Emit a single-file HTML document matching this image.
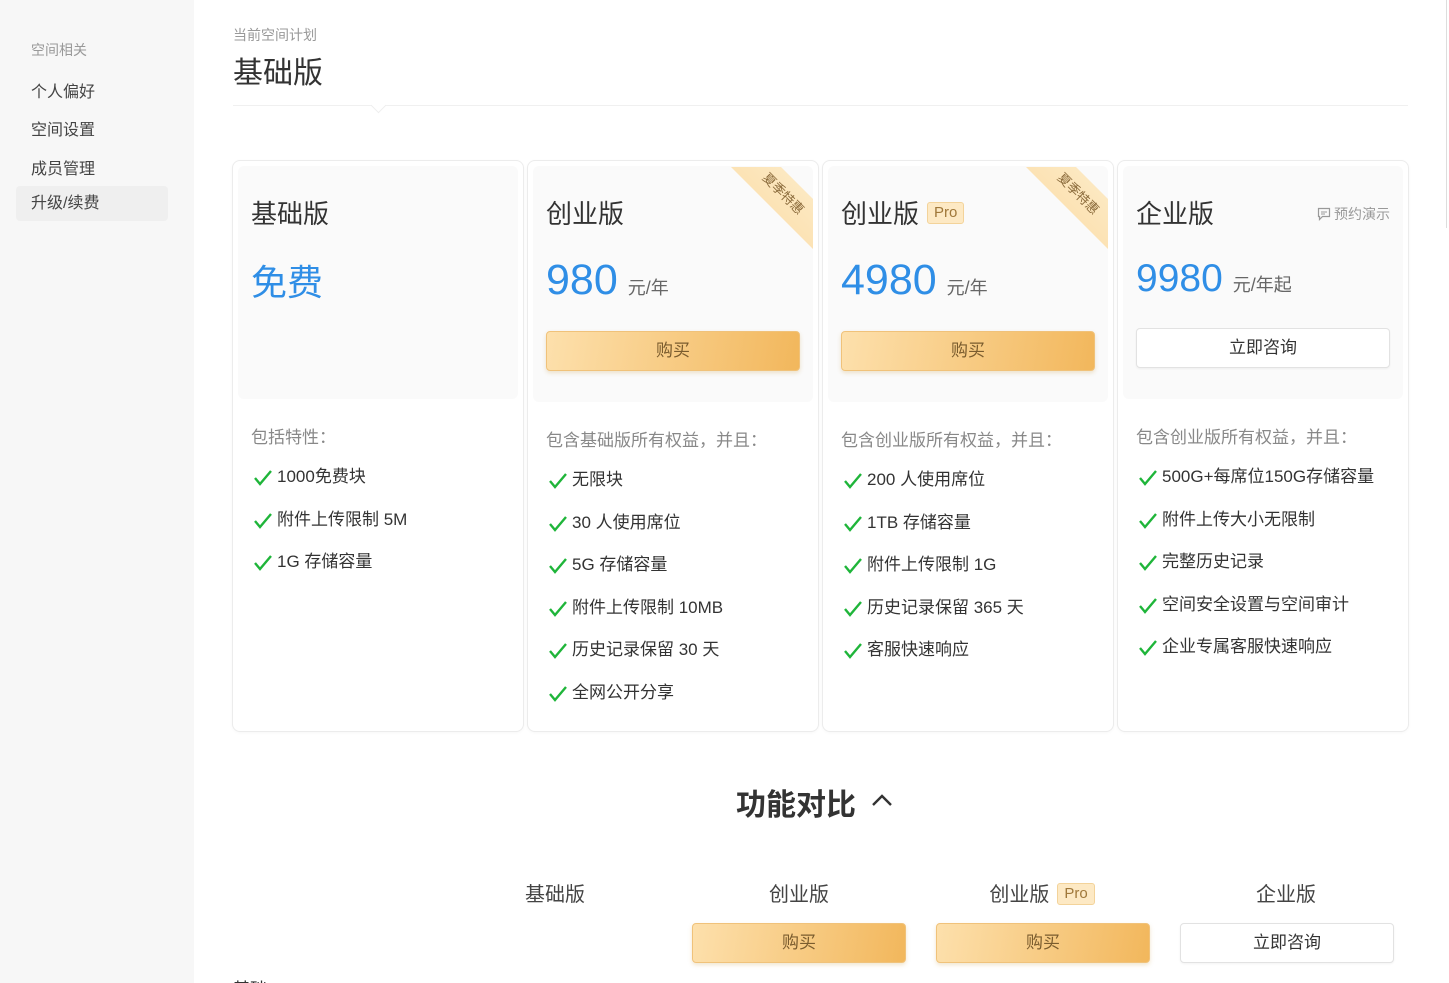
<!DOCTYPE html><html><head><meta charset="utf-8"><style>
*{box-sizing:border-box;margin:0;padding:0}
html,body{width:1449px;height:983px;overflow:hidden}
body{background:#fff;font-family:"Liberation Sans","Noto Sans CJK SC",sans-serif;color:#333;position:relative}
.side{position:absolute;left:0;top:0;width:194px;height:983px;background:#f7f7f7}
.side div{position:absolute;left:31px;font-size:16px;color:#444}
.abs{position:absolute}
.card{position:absolute;top:160px;height:572px;border:1px solid #ececec;border-radius:8px;background:#fff;box-shadow:0 1px 3px rgba(0,0,0,.03)}
.top{position:absolute;left:5px;right:5px;top:5px;height:233px;background:#fafafa;border-radius:6px}
.title{position:absolute;left:18px;top:33px;font-size:26px;color:#333}
.price{position:absolute;left:18px;top:95px;font-size:43px;color:#2f8ee6}
.price span{font-size:18px;color:#666;margin-left:10px}
.btn{position:absolute;left:18px;width:254px;height:40px;top:170px;border-radius:4px;background:linear-gradient(100deg,#fde0ac,#f2b75c);border:1px solid #f0c27a;box-shadow:0 2px 4px rgba(200,150,60,.25);text-align:center;line-height:38px;font-size:17px;color:#7a5c2e}
.wbtn{background:#fff;border:1px solid #e2e2e2;box-shadow:0 1px 2px rgba(0,0,0,.05);color:#333}
.fh{position:absolute;left:18px;font-size:17px;color:#888}
.fl{position:absolute;left:20px;font-size:17px;color:#333;line-height:20px}
.fl div{height:42.6px;display:flex;align-items:flex-start}
.fl svg{margin-right:4px;margin-top:2px}
.rib{position:absolute;top:6px;right:5px;width:82px;height:82px;clip-path:polygon(0 0,50px 0,82px 32px,82px 82px);background:linear-gradient(45deg,#fbd9a0,#fdecc9)}
.rib div{position:absolute;left:22px;top:16px;width:60px;height:22px;transform:rotate(45deg);color:#8a6a3a;font-size:13px;text-align:center;line-height:22px;white-space:nowrap}
.pro{display:inline-block;font-size:15px;color:#a0783a;background:#fde9c4;border:1px solid #f3d39a;border-radius:3px;padding:0 6px;line-height:20px;vertical-align:middle;margin-left:8px;position:relative;top:-3px}
</style></head><body>
<div class="side">
<div style="top:40px;font-size:14px;color:#999">空间相关</div>
<div style="top:78px">个人偏好</div>
<div style="top:116px">空间设置</div>
<div style="top:155px">成员管理</div>
<div style="left:16px;top:186px;width:152px;height:35px;background:#efefef;border-radius:4px;padding-left:15px;line-height:35px">升级/续费</div>
</div>
<div class="abs" style="left:233px;top:25px;font-size:14px;color:#999">当前空间计划</div>
<div class="abs" style="left:233px;top:48px;font-size:30px;color:#333">基础版</div>
<div class="abs" style="left:233px;top:105px;width:1175px;height:1px;background:#f0f0f0"></div>
<div class="abs" style="left:373px;top:100px;width:11px;height:11px;background:#fff;border-right:1px solid #eee;border-bottom:1px solid #eee;transform:rotate(45deg)"></div>
<div class="abs" style="left:1446px;top:0;width:1px;height:228px;background:#ddd"></div>

<svg width="0" height="0" style="position:absolute"><defs><symbol id="ck" viewBox="0 0 20 18"><path d="M2 9l5 6L18 2" fill="none" stroke="#1fb53a" stroke-width="2.4"/></symbol></defs></svg>

<div class="card" style="left:232px;width:292px">
<div class="top"></div>
<div class="title">基础版</div>
<div class="price" style="font-size:36px;top:93px">免费</div>
<div class="fh" style="top:262px">包括特性：</div>
<div class="fl" style="top:306px">
<div><svg width="20" height="18"><use href="#ck"/></svg>1000免费块</div>
<div><svg width="20" height="18"><use href="#ck"/></svg>附件上传限制 5M</div>
<div><svg width="20" height="18"><use href="#ck"/></svg>1G 存储容量</div>
</div></div>

<div class="card" style="left:527px;width:292px">
<div class="top" style="height:236px"></div>
<div class="rib"><div>夏季特惠</div></div>
<div class="title">创业版</div>
<div class="price">980<span>元/年</span></div>
<div class="btn">购买</div>
<div class="fh" style="top:265px">包含基础版所有权益，并且：</div>
<div class="fl" style="top:309px">
<div><svg width="20" height="18"><use href="#ck"/></svg>无限块</div>
<div><svg width="20" height="18"><use href="#ck"/></svg>30 人使用席位</div>
<div><svg width="20" height="18"><use href="#ck"/></svg>5G 存储容量</div>
<div><svg width="20" height="18"><use href="#ck"/></svg>附件上传限制 10MB</div>
<div><svg width="20" height="18"><use href="#ck"/></svg>历史记录保留 30 天</div>
<div><svg width="20" height="18"><use href="#ck"/></svg>全网公开分享</div>
</div></div>

<div class="card" style="left:822px;width:292px">
<div class="top" style="height:236px"></div>
<div class="rib"><div>夏季特惠</div></div>
<div class="title">创业版<span class="pro">Pro</span></div>
<div class="price">4980<span>元/年</span></div>
<div class="btn">购买</div>
<div class="fh" style="top:265px">包含创业版所有权益，并且：</div>
<div class="fl" style="top:309px">
<div><svg width="20" height="18"><use href="#ck"/></svg>200 人使用席位</div>
<div><svg width="20" height="18"><use href="#ck"/></svg>1TB 存储容量</div>
<div><svg width="20" height="18"><use href="#ck"/></svg>附件上传限制 1G</div>
<div><svg width="20" height="18"><use href="#ck"/></svg>历史记录保留 365 天</div>
<div><svg width="20" height="18"><use href="#ck"/></svg>客服快速响应</div>
</div></div>

<div class="card" style="left:1117px;width:292px">
<div class="top" style="height:233px"></div>
<div class="title">企业版</div>
<div class="abs" style="right:18px;top:43px;font-size:14px;color:#999"><svg width="14" height="14" viewBox="0 0 14 14" style="vertical-align:-2px;margin-right:3px"><path d="M1.5 1.5h11v8h-7l-3 3v-3h-1z" fill="none" stroke="#999" stroke-width="1.2"/><path d="M4 5h6M4 7h4" stroke="#999" stroke-width="1"/></svg>预约演示</div>
<div class="price" style="font-size:39px;top:96px">9980<span>元/年起</span></div>
<div class="btn wbtn" style="top:167px">立即咨询</div>
<div class="fh" style="top:262px">包含创业版所有权益，并且：</div>
<div class="fl" style="top:306px">
<div><svg width="20" height="18"><use href="#ck"/></svg>500G+每席位150G存储容量</div>
<div><svg width="20" height="18"><use href="#ck"/></svg>附件上传大小无限制</div>
<div><svg width="20" height="18"><use href="#ck"/></svg>完整历史记录</div>
<div><svg width="20" height="18"><use href="#ck"/></svg>空间安全设置与空间审计</div>
<div><svg width="20" height="18"><use href="#ck"/></svg>企业专属客服快速响应</div>
</div></div>

<div class="abs" style="left:736px;top:780px;font-size:30px;font-weight:bold;color:#333">功能对比</div>
<svg class="abs" style="left:870px;top:792px" width="24" height="16" viewBox="0 0 24 16"><path d="M3 13l9-9 9 9" fill="none" stroke="#333" stroke-width="2.4"/></svg>

<div class="abs" style="left:495px;width:120px;text-align:center;top:878px;font-size:20px;color:#444">基础版</div>
<div class="abs" style="left:739px;width:120px;text-align:center;top:878px;font-size:20px;color:#444">创业版</div>
<div class="abs" style="left:962px;width:160px;text-align:center;top:878px;font-size:20px;color:#444">创业版<span class="pro" style="top:-2px">Pro</span></div>
<div class="abs" style="left:1226px;width:120px;text-align:center;top:878px;font-size:20px;color:#444">企业版</div>
<div class="btn" style="left:692px;top:923px;width:214px">购买</div>
<div class="btn" style="left:936px;top:923px;width:214px">购买</div>
<div class="btn wbtn" style="left:1180px;top:923px;width:214px">立即咨询</div>
<div class="abs" style="left:233px;top:975px;font-size:17px;color:#333">基础</div>
</body></html>
